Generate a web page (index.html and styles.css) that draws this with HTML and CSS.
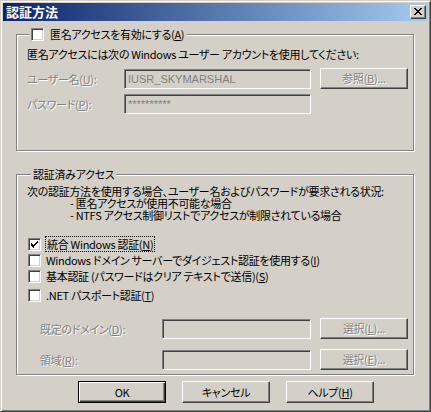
FILE: index.html
```html
<!DOCTYPE html>
<html lang="ja">
<head>
<meta charset="utf-8">
<title>認証方法</title>
<link rel="stylesheet" href="styles.css">
</head>
<body>
<div class="window">
  <div class="titlebar">
    <span class="title">認証方法</span>
    <span class="close"><svg width="8" height="7" viewBox="0 0 8 7"><path d="M0 0h2v1h-2zM6 0h2v1h-2zM1 1h2v1h-2zM5 1h2v1h-2zM2 2h4v1h-4zM3 3h2v1h-2zM2 4h4v1h-4zM1 5h2v1h-2zM5 5h2v1h-2zM0 6h2v1h-2zM6 6h2v1h-2z" fill="#000"/></svg></span>
  </div>
  <div class="content">
    <fieldset class="group group-anon">
      <legend class="legend"><span class="check"></span><span>匿名アクセスを有効にする(<u>A</u>)</span></legend>
      <p class="note">匿名アクセスには次の Windows ユーザー アカウントを使用してください:</p>
      <div class="field">
        <span class="label disabled">ユーザー名(<u>U</u>):</span>
        <span class="input input-wide">IUSR_SKYMARSHAL</span>
        <span class="button disabled-btn">参照(<u>B</u>)...</span>
      </div>
      <div class="field">
        <span class="label disabled">パスワード(<u>P</u>):</span>
        <span class="input input-wide">**********</span>
      </div>
    </fieldset>

    <fieldset class="group group-auth">
      <legend class="legend legend-text">認証済みアクセス</legend>
      <p class="desc">次の認証方法を使用する場合、ユーザー名およびパスワードが要求される状況:<br><span class="indent"></span>- 匿名アクセスが使用不可能な場合<br><span class="indent"></span>- NTFS アクセス制御リストでアクセスが制限されている場合</p>
      <ul class="options">
        <li class="option"><span class="check checked"><svg width="7" height="7" viewBox="0 0 7 7"><path d="M6 0h1v1h-1zM5 1h2v1h-2zM0 2h1v1h-1zM4 2h2v1h-2zM0 3h2v1h-2zM3 3h2v1h-2zM0 4h4v1h-4zM1 5h2v1h-2zM2 5h1v1h-1zM2 6h1v1h-1z" fill="#000"/></svg></span><span class="focus">統合 Windows 認証(<u>N</u>)</span></li>
        <li class="option"><span class="check"></span><span>Windows ドメイン サーバーでダイジェスト認証を使用する(<u>I</u>)</span></li>
        <li class="option"><span class="check"></span><span>基本認証 (パスワードはクリア テキストで送信)(<u>S</u>)</span></li>
        <li class="option option-last"><span class="check"></span><span>.NET パスポート認証(<u>T</u>)</span></li>
      </ul>
      <div class="field field-sub">
        <span class="label label-sub disabled">既定のドメイン(<u>D</u>):</span>
        <span class="input input-narrow"></span>
        <span class="button disabled-btn">選択(<u>L</u>)...</span>
      </div>
      <div class="field field-sub">
        <span class="label label-sub disabled">領域(<u>R</u>):</span>
        <span class="input input-narrow"></span>
        <span class="button disabled-btn">選択(<u>E</u>)...</span>
      </div>
    </fieldset>

    <div class="actions">
      <span class="button default-btn">OK</span>
      <span class="button">キャンセル</span>
      <span class="button">ヘルプ(<u>H</u>)</span>
    </div>
  </div>
</div>
</body>
</html>
```

FILE: styles.css
```css
* { box-sizing: border-box; }
html, body { margin: 0; padding: 0; background: #d4d0c8; }
body {
  font-family: "Noto Sans CJK JP", "Liberation Sans", sans-serif;
  font-size: 11px;
  line-height: 12px;
  letter-spacing: -0.3px;
  color: #000;
  font-feature-settings: "palt";
}
u { text-decoration: underline; text-underline-offset: 1px; }

.window {
  width: 431px;
  height: 412px;
  border: 1px solid;
  border-color: #d4d0c8 #404040 #404040 #d4d0c8;
  box-shadow: inset 1px 1px 0 #fff, inset -1px -1px 0 #808080;
  padding: 2px;
  background: #d4d0c8;
  display: flex;
  flex-direction: column;
}

.titlebar {
  height: 18px;
  background: linear-gradient(to right, #0a246a, #a6caf0);
  display: flex;
  align-items: center;
  justify-content: space-between;
  padding: 0 2px 0 3px;
}
.title {
  color: #fff;
  font-weight: bold;
  font-size: 13px;
  letter-spacing: 0;
}
.close {
  width: 16px;
  height: 14px;
  background: #d4d0c8;
  border: 1px solid;
  border-color: #fff #404040 #404040 #fff;
  box-shadow: inset -1px -1px 0 #808080;
  display: flex;
  align-items: center;
  justify-content: center;
  padding: 0 1px 1px 0;
}
.close svg { display: block; }

.content {
  padding: 6px 0 0 13px;
  display: flex;
  flex-direction: column;
}

.group {
  width: 398px;
  margin: 0;
  border: 1px solid #808080;
  box-shadow: inset 1px 1px 0 #fff, 1px 1px 0 #fff;
  padding: 0 0 0 10px;
  min-width: 0;
}
.legend {
  padding: 0 3px 0 2px;
  margin-left: 2px;
  background: #d4d0c8;
  display: flex;
  align-items: center;
  height: 14px;
}
.legend .check { margin-right: 6px; }
.legend-text { margin-left: 4px; padding: 0 2px 0 2px; }

.group-anon { height: 124px; }
.group-auth { height: 208px; margin-top: 16px; }

.note { margin: 7px 0 0 0; white-space: nowrap; }

.field {
  display: flex;
  align-items: center;
  margin-top: 8px;
}
.field + .field { margin-top: 5px; }

.label { width: 97px; white-space: nowrap; }
.label-sub { width: 135px; padding-left: 13px; }
.disabled { color: #808080; text-shadow: 1px 1px 0 #fff; }

.input {
  height: 20px;
  border: 1px solid;
  border-color: #808080 #fff #fff #808080;
  box-shadow: inset 1px 1px 0 #404040, inset -1px -1px 0 #d4d0c8;
  background: #d4d0c8;
  color: #808080;
  font-family: "Liberation Sans", "Noto Sans CJK JP", sans-serif;
  font-size: 11px;
  letter-spacing: 0;
  padding: 3px 0 0 3px;
  white-space: nowrap;
  overflow: hidden;
}
.input-wide { width: 187px; }
.input-narrow { width: 149px; }

.button {
  width: 88px;
  height: 21px;
  border: 1px solid;
  border-color: #fff #404040 #404040 #fff;
  box-shadow: inset -1px -1px 0 #808080;
  background: #d4d0c8;
  display: flex;
  align-items: center;
  justify-content: center;
  white-space: nowrap;
  padding-bottom: 1px;
}
.field .button { margin-left: 9px; }
.disabled-btn { color: #808080; text-shadow: 1px 1px 0 #fff; }

.desc { margin: 4px 0 0 0; white-space: nowrap; }
.indent { display: inline-block; width: 43px; }

.options {
  list-style: none;
  margin: 15px 0 0 1px;
  padding: 0;
}
.option {
  display: flex;
  align-items: center;
  height: 16px;
  white-space: nowrap;
}
.option .check { margin-right: 5px; }
.option-last { margin-top: 3px; }

.check {
  width: 13px;
  height: 13px;
  flex: none;
  border: 1px solid;
  border-color: #808080 #fff #fff #808080;
  box-shadow: inset 1px 1px 0 #404040, inset -1px -1px 0 #d4d0c8;
  background: #fff;
  display: flex;
  align-items: center;
  justify-content: center;
}
.check svg { display: block; }
.focus { outline: 1px dotted #000; outline-offset: 0; padding: 1px 1px; }

.field-sub { margin-top: 15px; }
.field-sub + .field-sub { margin-top: 10px; }

.actions {
  display: flex;
  gap: 16px;
  margin: 6px 0 0 62px;
}
.actions .button { height: 22px; }
.default-btn {
  border: 1px solid #000;
  box-shadow: inset 1px 1px 0 #fff, inset -1px -1px 0 #404040, inset -2px -2px 0 #808080;
}
```
